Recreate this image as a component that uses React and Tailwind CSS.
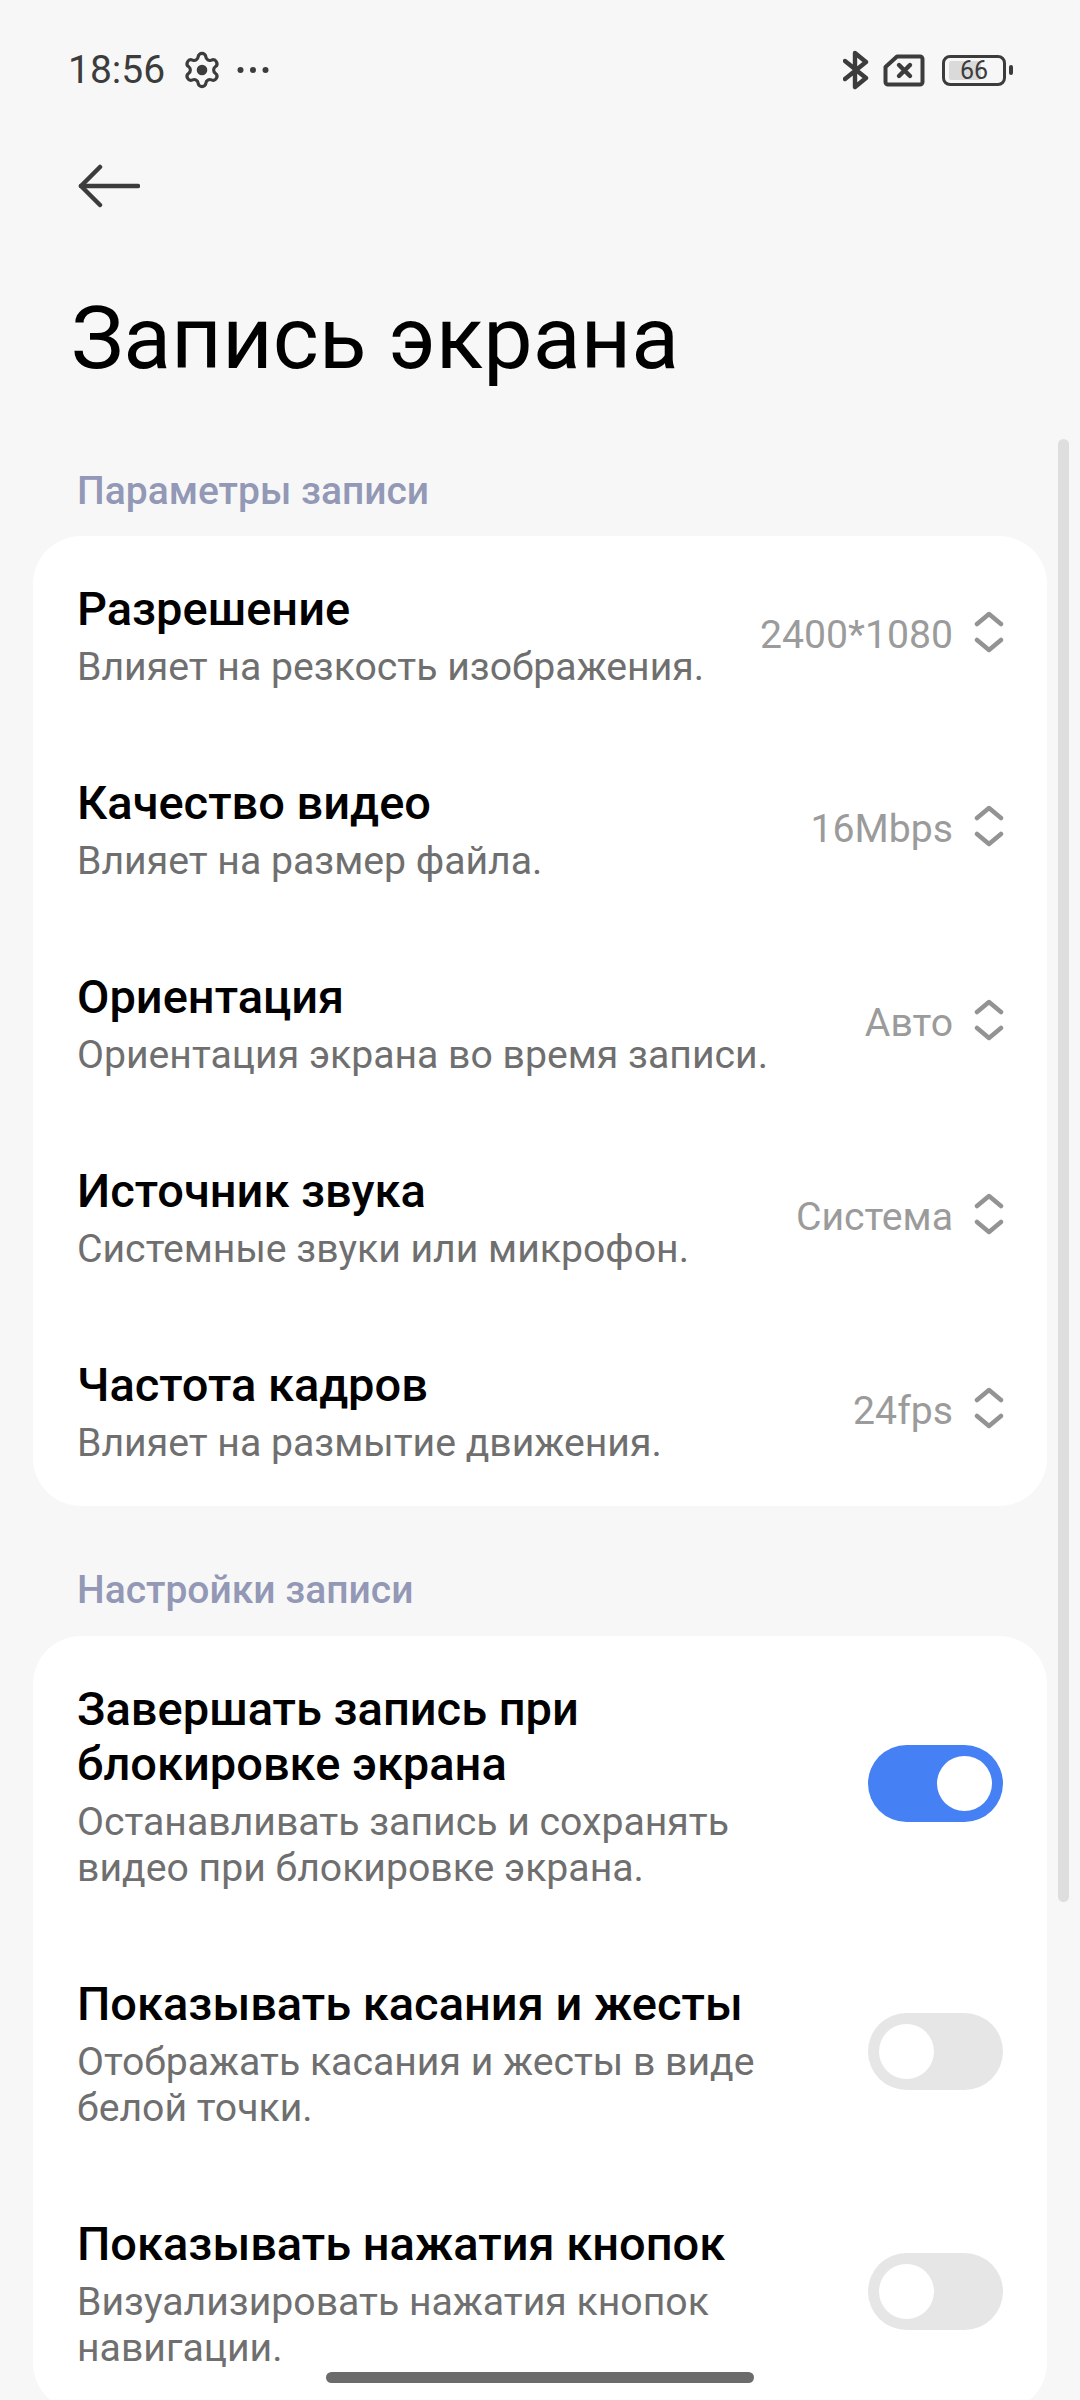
const selectRows = [
  { title: 'Разрешение', sub: 'Влияет на резкость изображения.', value: '2400*1080' },
  { title: 'Качество видео', sub: 'Влияет на размер файла.', value: '16Mbps' },
  { title: 'Ориентация', sub: 'Ориентация экрана во время записи.', value: 'Авто' },
  { title: 'Источник звука', sub: 'Системные звуки или микрофон.', value: 'Система' },
  { title: 'Частота кадров', sub: 'Влияет на размытие движения.', value: '24fps' },
];

const toggleRows = [
  { title: ['Завершать запись при', 'блокировке экрана'], sub: ['Останавливать запись и сохранять', 'видео при блокировке экрана.'], on: true },
  { title: ['Показывать касания и жесты'], sub: ['Отображать касания и жесты в виде', 'белой точки.'], on: false },
  { title: ['Показывать нажатия кнопок'], sub: ['Визуализировать нажатия кнопок', 'навигации.'], on: false },
];

const Gear = () => (
  <svg width="40" height="40" viewBox="0 0 24 24" fill="none" stroke="#3c3c3c" strokeWidth="1.9" strokeLinecap="round" strokeLinejoin="round">
    <path d="M9.671 4.136a2.34 2.34 0 0 1 4.659 0 2.34 2.34 0 0 0 3.319 1.915 2.34 2.34 0 0 1 2.33 4.033 2.34 2.34 0 0 0 0 3.831 2.34 2.34 0 0 1-2.33 4.033 2.34 2.34 0 0 0-3.319 1.915 2.34 2.34 0 0 1-4.659 0 2.34 2.34 0 0 0-3.32-1.915 2.34 2.34 0 0 1-2.33-4.033 2.34 2.34 0 0 0 0-3.831A2.34 2.34 0 0 1 6.35 6.051a2.34 2.34 0 0 0 3.319-1.915" />
    <circle cx="12" cy="12" r="3.2" fill="#3c3c3c" stroke="none" />
  </svg>
);

const Dots = () => (
  <svg width="32" height="8" viewBox="0 0 32 8" fill="#3c3c3c">
    <circle cx="3.5" cy="4" r="3" />
    <circle cx="16" cy="4" r="3" />
    <circle cx="28.5" cy="4" r="3" />
  </svg>
);

const Bluetooth = () => (
  <svg width="26" height="40" viewBox="0 0 26 40" fill="none" stroke="#3c3c3c" strokeWidth="4.4" strokeLinecap="round" strokeLinejoin="round">
    <path d="M2 11 L23 28 L12 37 V3 L23 12 L2 29" />
  </svg>
);

const Sim = () => (
  <svg width="42" height="33" viewBox="0 0 42 33" fill="none" stroke="#3c3c3c" strokeLinecap="round" strokeLinejoin="round">
    <path d="M14 2.5 H37 a2.5 2.5 0 0 1 2.5 2.5 V28 a2.5 2.5 0 0 1-2.5 2.5 H5 a2.5 2.5 0 0 1-2.5-2.5 V13 Z" strokeWidth="4" />
    <path d="M16 11 L27 22 M27 11 L16 22" strokeWidth="4.4" />
  </svg>
);

const Battery = () => (
  <div className="flex items-center gap-[3px]">
    <div className="relative flex h-[31px] w-[64px] items-center justify-center overflow-hidden rounded-[8px] border-[3px] border-[#3c3c3c]">
      <div className="absolute top-[3px] bottom-[3px] left-[4px] w-[32px] rounded-[2px] bg-[#dadada]" />
      <span className="relative text-[25px] leading-none text-[#3c3c3c]">66</span>
    </div>
    <div className="h-[10px] w-[4px] rounded-[2px] bg-[#3c3c3c]" />
  </div>
);

const Chevrons = () => (
  <svg width="30" height="44" viewBox="0 0 30 44" fill="none" stroke="#939393" strokeWidth="4.5" strokeLinecap="round" strokeLinejoin="round" className="shrink-0">
    <path d="M3 13 L15 3 L27 13" />
    <path d="M3 29 L15 39 L27 29" />
  </svg>
);

const Toggle = ({ on }) => (
  <div className={`flex h-[77px] w-[135px] shrink-0 items-center rounded-full px-[11px] ${on ? 'justify-end bg-[#4680f5]' : 'justify-start bg-[#e6e6e6]'}`}>
    <div className="h-[55px] w-[55px] rounded-full bg-white" />
  </div>
);

const SectionLabel = ({ children, className }) => (
  <div className={`pl-[77px] text-[39px] leading-[46px] font-medium text-[#9298b5] ${className}`}>{children}</div>
);

const RowText = ({ title, sub }) => (
  <div className="pt-[45px] pb-[40px]">
    <div className="text-[47px] leading-[55px] font-medium text-black">
      {title.map((line) => <div key={line}>{line}</div>)}
    </div>
    <div className="mt-[8px] text-[39.2px] leading-[46px] text-[#6f6f6f]">
      {sub.map((line) => <div key={line}>{line}</div>)}
    </div>
  </div>
);

const App = () => {
  return (
    <div className="relative h-[2400px] w-[1080px] overflow-hidden bg-[#f7f7f7] font-['Roboto',sans-serif]">
      {/* Status bar */}
      <div className="flex h-[140px] items-center justify-between pr-[67px] pl-[68px]">
        <div className="flex items-center">
          <span className="text-[39px] leading-none text-[#3c3c3c]">18:56</span>
          <div className="ml-[17px]"><Gear /></div>
          <div className="ml-[15px]"><Dots /></div>
        </div>
        <div className="flex items-center">
          <Bluetooth />
          <div className="ml-[14px]"><Sim /></div>
          <div className="ml-[17px]"><Battery /></div>
        </div>
      </div>

      {/* Back arrow */}
      <div className="pt-[24px] pl-[78px]">
        <svg width="62" height="44" viewBox="0 0 62 44" fill="none" stroke="#3c3c3c" strokeWidth="4.5" strokeLinecap="round" strokeLinejoin="round">
          <path d="M22 3 L3 22 L22 41" />
          <path d="M3 22 H60" />
        </svg>
      </div>

      <h1 className="mt-[80px] pl-[71px] text-[88px] leading-[100px] font-normal text-black">Запись экрана</h1>

      <SectionLabel className="mt-[80px]">Параметры записи</SectionLabel>

      {/* Recording parameters */}
      <div className="mx-[33px] mt-[22px] rounded-[48px] bg-white">
        {selectRows.map((row) => (
          <div key={row.title} className="flex items-center justify-between pr-[43px] pl-[44px]">
            <RowText title={[row.title]} sub={[row.sub]} />
            <div className="flex items-center gap-[21px]">
              <span className="mt-[3px] text-[39.2px] leading-[46px] text-[#9b9b9b]">{row.value}</span>
              <Chevrons />
            </div>
          </div>
        ))}
      </div>

      <SectionLabel className="mt-[61px]">Настройки записи</SectionLabel>

      {/* Recording settings */}
      <div className="mx-[33px] mt-[23px] rounded-[48px] bg-white">
        {toggleRows.map((row) => (
          <div key={row.title[0]} className="flex items-center justify-between pr-[44px] pl-[44px]">
            <RowText title={row.title} sub={row.sub} />
            <Toggle on={row.on} />
          </div>
        ))}
      </div>

      {/* Scrollbar and home indicator sit over the content */}
      <div className="absolute top-[439px] left-[1058px] h-[1463px] w-[11px] rounded-full bg-[#dedede]" />
      <div className="absolute top-[2372px] left-[326px] h-[11px] w-[428px] rounded-full bg-[#6b6b6b]" />
    </div>
  );
};

export default App;
